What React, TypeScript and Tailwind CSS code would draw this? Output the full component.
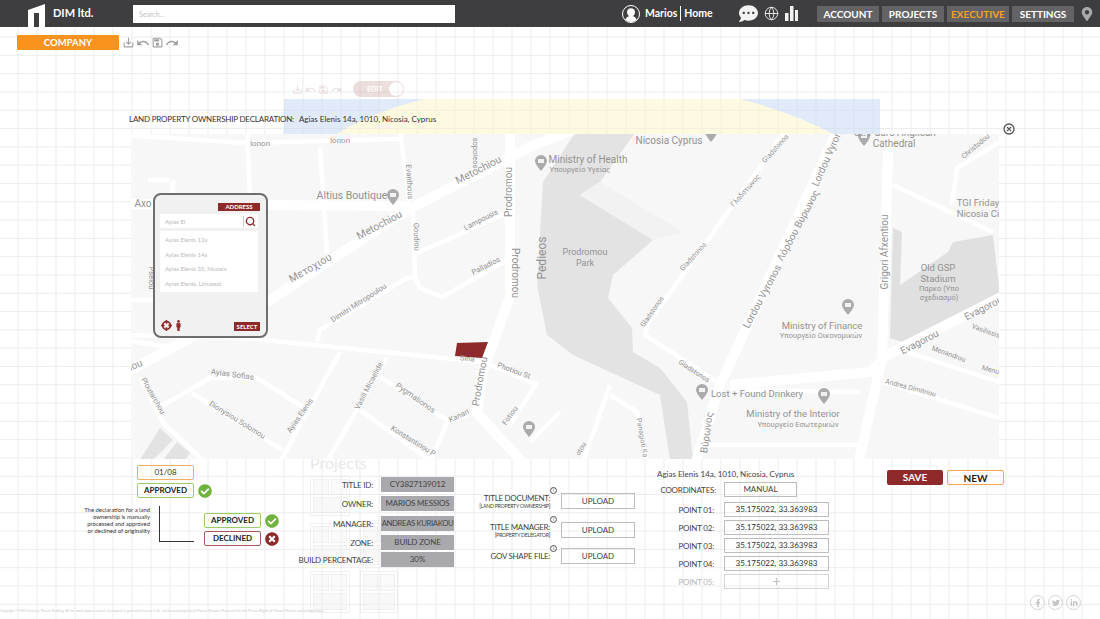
import React from 'react';
import { Globe, Search, Plus } from 'lucide-react';
import { FaCommentDots, FaMapMarkerAlt, FaCheckCircle, FaTimesCircle, FaFacebookF, FaTwitter, FaLinkedinIn, FaMale } from 'react-icons/fa';
import { MdSaveAlt, MdUndo, MdRedo, MdOutlineSave } from 'react-icons/md';

const font = { fontFamily: '"Lato", "Open Sans", sans-serif' };

const navItems = ['ACCOUNT', 'PROJECTS', 'EXECUTIVE', 'SETTINGS'];

const titleFields = [
    ['TITLE ID:', 'CY3827139012', 'mb-[4px]', 'text-[8px] tracking-[-0.1px]'],
    ['OWNER:', 'MARIOS MESSIOS', 'mb-[5px]', 'text-[8px] tracking-[-0.2px]'],
    ['MANAGER:', 'ANDREAS KURIAKOU', 'mb-[4px]', 'text-[7.8px] tracking-[-0.4px]'],
    ['ZONE:', 'BUILD ZONE', 'mb-[2px]', 'text-[8px] tracking-[-0.1px]'],
    ['BUILD PERCENTAGE:', '30%', '', 'text-[8px]'],
];

const points = ['POINT 01:', 'POINT 02:', 'POINT 03:', 'POINT 04:'];

const mainRoads = [
    'M120 376 L190 338 L270 300 L407 210 L530 147 L585 125',
    'M510 125 L510 297 L483 370 L477 413 L525 465',
    'M125 204 L410 206',
    'M840 125 L720 385 L695 465',
    'M889 125 L882 358 L858 465',
    'M1005 295 L887 355 L870 372 L730 385',
];

const minorRoads = [
    'M125 135 L247 143 L400 139',
    'M247 130 L250 195',
    'M400 130 L410 207',
    'M320 147 L327 253',
    'M413 213 L415 277 L420 288 L442 297 L507 260',
    'M417 253 L507 213',
    'M317 342 L320 330 L407 278 L415 277',
    'M125 335 L243 338 L483 362 L535 384',
    'M160 407 L210 378 L257 378 L303 407',
    'M340 352 L280 462',
    'M387 357 L327 462',
    'M380 377 L447 420',
    'M360 410 L432 462',
    'M480 410 L447 423 L430 462',
    'M140 377 L163 423 L205 462',
    'M192 393 L282 450',
    'M125 340 L170 347',
    'M130 300 L156 300',
    'M790 125 L647 325 L645 335 L717 382',
    'M883 382 L1005 420',
    'M907 352 L1005 384',
    'M893 185 L993 232',
    'M1003 140 L957 168 L953 198 L952 205',
    'M610 385 L583 462',
    'M610 395 L637 412 L647 462',
    'M560 412 L530 442',
    'M537 382 L510 425',
    'M860 392 L735 390',
    'M865 445 L705 445',
    'M175 180 L172 184 L173 195',
    'M148 180 L170 180',
];

type MapLabel = [string, number, number, number, number?];

const mapLabels: MapLabel[] = [
    ['Ionon', 260, 146, 0, 8],
    ['Ionon', 340, 143, 0, 8],
    ['Evanthous', 407, 182, 87, 7.5],
    ['sopoleos', 473, 153, 90, 7.5],
    ['Metochiou', 480, 173, -27, 10.5],
    ['Metochiou', 381, 228, -28, 10.5],
    ['Μετοχιου', 312, 271, -30, 10.5],
    ['Prodromou', 512, 192, -90, 10],
    ['Prodromou', 512, 273, 90, 10],
    ['Altius Boutique', 352, 199, 0, 10.5],
    ['Axo', 143, 207, 0, 10],
    ['Goudiou', 414, 237, 88, 7.5],
    ['Lampousis', 482, 222, -27, 7.5],
    ['Palladios', 487, 268, -27, 7.5],
    ['Dimitri Mitropoulou', 360, 305, -33, 7.5],
    ['Pselou', 149, 278, 90, 7.5],
    ['Sina', 467, 361, 5, 7.5],
    ['Photiou St', 513, 373, 20, 7.5],
    ['Prodromou', 483, 382, -80, 10],
    ['Ayias Sofias', 232, 377, 8, 8],
    ['Ploutarchou', 151, 397, 60, 7.5],
    ['Dionysiou Solomou', 236, 422, 32, 7.5],
    ['Ayias Elenis', 302, 417, -55, 7.5],
    ['Vasili Micaelide', 371, 387, -62, 7.5],
    ['Pygmalionos', 414, 400, 35, 8],
    ['Kanari', 460, 418, -25, 7.5],
    ['Konstantinou P', 412, 443, 32, 7.5],
    ['Fotiou', 512, 417, -55, 7.5],
    ['iou', 137, 368, -25, 10],
    ['Nicosia Cyprus', 669, 144, 0, 10],
    ['Ministry of Health', 588, 163, 0, 10],
    ['Υπουργείο Υγείας', 580, 172, 0, 7.5],
    ['St. Paul\'s Anglican', 895, 136, 0, 10],
    ['Cathedral', 894, 147, 0, 10],
    ['Pedieos', 546, 258, -90, 12],
    ['Prodromou', 585, 255, 0, 9],
    ['Park', 585, 266, 0, 9],
    ['Γλαδστώνος', 747, 192, -48, 7],
    ['Gladstonos', 695, 258, -48, 7],
    ['Gladstonos', 777, 150, -48, 7],
    ['Gladstonos', 654, 313, -55, 7],
    ['Gladstonos', 693, 373, 33, 7],
    ['Lordou Vyronos', 765, 298, -62, 10],
    ['Λόρδου Βύρωνος', 801, 227, -62, 10],
    ['Lordou Vyronos', 832, 155, -66, 10],
    ['Βύρωνος', 710, 433, -82, 10],
    ['Grigori Afxentiou', 888, 252, -90, 10],
    ['Old GSP', 938, 271, 0, 9.5],
    ['Stadium', 938, 282, 0, 9.5],
    ['Παρκο (Υπο', 939, 291, 0, 7.5],
    ['σχεδιασμό)', 939, 300, 0, 7.5],
    ['Ministry of Finance', 822, 329, 0, 9.5],
    ['Υπουργείο Οικονομικών', 821, 338, 0, 7.5],
    ['Evagorou', 921, 345, -27, 10],
    ['Evagorou', 985, 311, -27, 10],
    ['Lost + Found Drinkery', 757, 397, 0, 9.5],
    ['Ministry of the Interior', 793, 417, 0, 9.5],
    ['Υπουργείο Εσωτερικών', 798, 427, 0, 7.5],
    ['Menandrou', 948, 356, 20, 7],
    ['Andrea Dimitriou', 910, 390, 15, 7],
    ['TGI Friday', 978, 206, 0, 9.5],
    ['Nicosia Ci', 978, 217, 0, 9.5],
    ['Christodou', 977, 148, -40, 7],
    ['Vasilissis', 985, 333, 20, 7],
    ['Menu', 990, 372, 15, 7],
    ['Panagioti Ka', 640, 438, 80, 7],
    ['otou', 583, 450, -60, 7],
];

const pins = [[541, 163], [393, 197], [848, 307], [702, 392], [824, 396], [529, 429], [864, 138], [711, 134]];

const MapDrawing = () => (
    <svg viewBox="131 134 868 325" className="block w-[868px] h-[325px]" style={{ fontFamily: 'Roboto, sans-serif' }}>
        <rect x="131" y="134" width="868" height="325" fill="#f7f7f7" />
        <path d="M577 130 L637 130 L600 182 L580 195 L653 240 L613 275 L608 298 L632 328 L633 352 L660 368 L687 402 L693 460 L670 460 L660 395 L573 355 L547 335 L537 285 L543 182 Z" fill="#e3e3e3" />
        <path d="M580 195 L600 182 L683 232 L653 240 Z" fill="#f2f2f2" />
        <path d="M893 228 L902 232 L900 285 L948 252 L953 242 L993 235 L1000 295 L903 342 L890 338 Z" fill="#e0e0e0" />
        <path d="M140 460 L160 428 L173 440 L153 460 Z M163 460 L177 442 L190 453 L185 460 Z" fill="#e2e2e2" />
        {mainRoads.map((d) => <path key={d} d={d} fill="none" stroke="#fff" strokeWidth="10" strokeLinejoin="round" />)}
        {minorRoads.map((d) => <path key={d} d={d} fill="none" stroke="#fff" strokeWidth="4.5" strokeLinejoin="round" />)}
        <path d="M457 343 L488 342 L482 358 L455 356 Z" fill="#8f2a2a" />
        {pins.map(([x, y]) => (
            <g key={`${x}-${y}`}>
                <path d={`M${x - 6} ${y - 2} a6 6 0 1 1 12 0 q0 3 -6 10 q-6 -7 -6 -10 Z`} fill="#ababab" />
                <rect x={x - 3} y={y - 4} width="6" height="4" fill="#f2f2f2" />
            </g>
        ))}
        {mapLabels.map(([text, x, y, r, size]) => (
            <text key={`${text}-${x}`} x={x} y={y} fontSize={size ?? 8} fill="#929292" textAnchor="middle" transform={`rotate(${r} ${x} ${y})`}>
                {text}
            </text>
        ))}
    </svg>
);

const AddressPanel = () => (
    <div className="absolute left-[22px] top-[59px] w-[115px] h-[145px] rounded-[8px] border-2 border-[#6e6e6e] bg-[#f1f1f1] flex flex-col pl-[5px] pr-[8px] pt-[8px] pb-[5px]">
        <div className="self-end w-[42px] h-[8px] -mr-[2px] bg-[#8f2a2a] text-white text-[6px] font-bold leading-[8px] text-center">ADDRESS</div>
        <div className="mt-[3px] h-[14px] bg-white flex items-center justify-between pl-[5px] pr-[2px] text-[6px] text-[#b5b5b5]">
            <span>Ayias El</span>
            <span className="flex items-center border-l border-[#ccc] pl-[1px]"><Search size={11} color="#8f2a2a" strokeWidth={3} /></span>
        </div>
        <div className="mt-[3px] h-[61px] bg-white flex flex-col justify-around px-[5px] py-[1px] text-[6px] text-[#b9b9b9]">
            <span>Ayias Elenis 12a</span>
            <span>Ayias Elenis 14a</span>
            <span>Ayias Elenis 35, Nicosia</span>
            <span>Ayias Elenis, Limassol</span>
        </div>
        <div className="mt-auto -mr-[2px] flex items-end justify-between">
            <div className="flex items-center gap-[1px] pl-[1px]">
                <svg viewBox="0 0 12 12" className="w-[11px] h-[11px]">
                    <circle cx="6" cy="6" r="4.2" fill="none" stroke="#8f2a2a" strokeWidth="2" />
                    <path d="M6 0 V4 M6 8 V12 M0 6 H4 M8 6 H12" stroke="#8f2a2a" strokeWidth="1.6" />
                </svg>
                <FaMale size={11} color="#8f2a2a" />
            </div>
            <div className="w-[26px] h-[9px] bg-[#8f2a2a] text-white text-[6px] font-bold leading-[9px] text-center">SELECT</div>
        </div>
    </div>
);

const InfoDot = () => (
    <span className="absolute -right-[7px] -top-[6px] w-[7px] h-[7px] rounded-full border border-[#555] text-[5px] leading-[5px] text-center text-[#555]">i</span>
);

const Thumb = ({ className }: { className: string }) => (
    <div className={`absolute border border-[#e4e4e4] grid grid-cols-2 gap-[2px] p-[2px] opacity-50 ${className}`}>
        <div className="border border-[#e4e4e4] bg-[#f4f4f4]" />
        <div className="border border-[#e4e4e4] bg-[#f7f7f7]" />
        <div className="col-span-2 border border-[#e4e4e4] bg-[#f2f2f2]" />
    </div>
);

const App: React.FC = () => {
    return (
        <div
            className="relative w-[1100px] h-[619px] overflow-hidden flex flex-col bg-white bg-[linear-gradient(#ececee_1px,transparent_1px),linear-gradient(90deg,#ececee_1px,transparent_1px)] bg-[size:19px_18.3px] bg-[position:-1.5px_0px]"
            style={font}
        >
            {/* ghost layer left over behind the dialog */}
            <svg viewBox="0 0 596 35" className="absolute left-[284px] top-[99px] w-[596px] h-[35px]">
                <path d="M0 0 H141 Q90 12 53 35 H0 Z M456 0 H596 V35 H549 Q510 14 456 0 Z" fill="#c9d8f3" fillOpacity="0.55" />
                <path d="M53 35 Q90 12 141 0 L456 0 Q510 14 549 35 Z" fill="#fdf3c4" fillOpacity="0.5" />
            </svg>
            <div className="absolute left-[292px] top-[81px] flex items-center gap-[2px] opacity-15 text-[#8f2a2a]">
                <MdSaveAlt size={11} />
                <MdUndo size={11} />
                <MdOutlineSave size={11} />
                <MdRedo size={11} />
                <div className="relative ml-[9px] w-[51px] h-[16px] rounded-full bg-[#8f2a2a] text-white text-[7px] font-bold leading-[16px] pl-[14px]">
                    EDIT
                    <span className="absolute right-[1px] top-[1px] w-[14px] h-[14px] rounded-full bg-white" />
                </div>
            </div>
            <span className="absolute left-[310px] top-[451px] text-[16px] text-[#e9e9e9]">Projects</span>
            <Thumb className="left-[310px] top-[476px] w-[40px] h-[40px]" />
            <Thumb className="left-[310px] top-[523px] w-[40px] h-[42px]" />
            <Thumb className="left-[360px] top-[523px] w-[38px] h-[42px]" />
            <Thumb className="left-[310px] top-[571px] w-[40px] h-[42px]" />
            <Thumb className="left-[360px] top-[571px] w-[38px] h-[42px]" />

            <header className="relative h-[27px] shrink-0 bg-[#3e3e40] flex items-center">
                <div className="w-[133px] flex items-center self-stretch">
                    <svg viewBox="0 0 17 23" className="ml-[28px] mt-[4px] w-[17px] h-[23px]">
                        <path d="M0 6 L17 0 V23 H11 V9 H6 V23 H0 Z" fill="#fff" />
                    </svg>
                    <span className="ml-[8px] text-[11px] font-bold text-white whitespace-nowrap">DIM ltd.</span>
                </div>
                <div className="w-[322px] h-[18px] bg-white text-[7px] leading-[18px] pl-[6px] text-[#c4c4c4]">Search...</div>
                <div className="ml-[167px] w-[117px] flex items-center">
                    <div className="w-[18px] h-[18px] rounded-full border border-white overflow-hidden flex items-end justify-center">
                        <svg viewBox="0 0 18 18" className="w-[16px] h-[16px]">
                            <circle cx="9" cy="7" r="4.4" fill="#fff" />
                            <path d="M2 18 Q3 11 9 11 Q15 11 16 18 Z" fill="#fff" />
                        </svg>
                    </div>
                    <span className="ml-[5px] text-[10.5px] font-bold text-white">Marios</span>
                    <span className="mx-[3px] w-px h-[15px] bg-white" />
                    <span className="text-[10.5px] font-bold text-white">Home</span>
                </div>
                <FaCommentDots size={19} color="#f2f2f2" />
                <Globe size={15} color="#f2f2f2" strokeWidth={1.4} className="ml-[6px]" />
                <svg viewBox="0 0 13 15" className="ml-[6px] w-[13px] h-[15px]">
                    <path d="M0 7 H3.5 V15 H0 Z M5 0 H8.5 V15 H5 Z M10 4 H13 V15 H10 Z" fill="#f2f2f2" />
                </svg>
                <nav className="ml-[19px] flex gap-[3px]">
                    {navItems.map((item) => (
                        <div
                            key={item}
                            className={`w-[62px] h-[16px] bg-[#636366] text-center text-[10px] font-bold leading-[16px] ${item === 'EXECUTIVE' ? 'text-[#f7a11e]' : 'text-white'}`}
                        >
                            {item}
                        </div>
                    ))}
                </nav>
                <FaMapMarkerAlt size={14} color="#a9a9ab" className="ml-[6px]" />
            </header>

            <div className="relative mt-[8px] ml-[17px] flex items-center gap-[1px] text-[#a0a0a2]">
                <div className="w-[102px] h-[15px] mr-[2px] rounded-[1px] bg-[#f7931e] text-center text-[9.5px] font-bold leading-[15px] text-white">COMPANY</div>
                <MdSaveAlt size={13} />
                <MdUndo size={14} />
                <MdOutlineSave size={13} />
                <MdRedo size={14} />
            </div>

            <div className="relative mt-[63px] ml-[129px] h-[21px] text-[8px] text-[#333] leading-[13px]">
                <span className="tracking-[-0.2px]">LAND PROPERTY OWNERSHIP DECLARATION:</span><span className="ml-[5px]">Agias Elenis 14a, 1010, Nicosia, Cyprus</span>
            </div>

            <section className="relative ml-[131px] w-[868px] h-[325px] shrink-0">
                <MapDrawing />
                <AddressPanel />
                <svg viewBox="0 0 12 12" className="absolute left-[872px] -top-[11px] w-[12px] h-[12px]">
                    <circle cx="6" cy="6" r="5" fill="none" stroke="#555" strokeWidth="1.3" />
                    <path d="M4 4 L8 8 M8 4 L4 8" stroke="#555" strokeWidth="1.1" />
                </svg>
            </section>

            <section className="relative flex items-start">
                {/* status */}
                <div className="ml-[84px] w-[197px] mt-[6px]">
                    <div className="ml-[53px] w-[57px] h-[15px] rounded-[2px] border border-[#f0b060] text-center text-[8px] leading-[13px] text-[#333]">01/08</div>
                    <div className="mt-[3px] ml-[53px] flex items-center gap-[4px]">
                        <div className="w-[57px] h-[15px] rounded-[2px] border border-[#9ccb6b] text-center text-[8px] font-bold leading-[13px] text-[#222]">APPROVED</div>
                        <FaCheckCircle size={14} color="#6fb23e" />
                    </div>
                    <div className="mt-[8px] flex items-start">
                        <p className="w-[66px] whitespace-nowrap text-right text-[5.9px] leading-[7px] text-[#333]">
                            The declaration for a land<br />ownership is manually<br />processed and approved<br />or declined of originality
                        </p>
                        <div className="ml-[9px] w-[35px] h-[36px] border-l border-b border-[#333]" />
                        <div className="ml-[10px] mt-[7px] flex flex-col gap-[3px]">
                            <div className="flex items-center gap-[4px]">
                                <div className="w-[57px] h-[15px] rounded-[2px] border border-[#9ccb6b] text-center text-[8px] font-bold leading-[13px] text-[#222]">APPROVED</div>
                                <FaCheckCircle size={14} color="#6fb23e" />
                            </div>
                            <div className="flex items-center gap-[4px]">
                                <div className="w-[57px] h-[15px] rounded-[2px] border border-[#a85a5a] text-center text-[8px] font-bold leading-[13px] text-[#222]">DECLINED</div>
                                <FaTimesCircle size={14} color="#8f2a2a" />
                            </div>
                        </div>
                    </div>
                </div>

                {/* title fields */}
                <div className="ml-[19px] mt-[18px] w-[154px] flex flex-col text-[#444]">
                    {titleFields.map(([label, value, rowClass, valueClass]) => (
                        <div key={label} className={`flex items-center h-[15px] ${rowClass}`}>
                            <span className="w-[73px] whitespace-nowrap flex justify-end text-[8px] tracking-[-0.2px]">{label}</span>
                            <span className={`ml-[8px] w-[73px] h-full bg-[#a9a9ad] text-center whitespace-nowrap leading-[15px] ${valueClass}`}>{value}</span>
                        </div>
                    ))}
                </div>

                {/* documents */}
                <div className="ml-[16px] mt-[34px] w-[165px] flex flex-col text-[#444]">
                    <div className="flex h-[16px] items-center">
                        <div className="w-[80px] text-[8px] tracking-[-0.3px] leading-[10px] whitespace-nowrap flex flex-col items-end">
                            <span className="relative">TITLE DOCUMENT:<InfoDot /></span>
                            <span className="text-[5.3px] leading-[6px]">[LAND PROPERTY OWNERSHIP]</span>
                        </div>
                        <div className="ml-[11px] w-[74px] h-[16px] border border-[#bdbdbd] text-center text-[8px] leading-[14px]">UPLOAD</div>
                    </div>
                    <div className="flex h-[16px] mt-[13px] items-center">
                        <div className="w-[80px] text-[8px] tracking-[-0.3px] leading-[10px] whitespace-nowrap flex flex-col items-end">
                            <span className="relative">TITLE MANAGER:<InfoDot /></span>
                            <span className="text-[5.3px] leading-[6px]">[PROPERTY DELEGATOR]</span>
                        </div>
                        <div className="ml-[11px] w-[74px] h-[16px] border border-[#bdbdbd] text-center text-[8px] leading-[14px]">UPLOAD</div>
                    </div>
                    <div className="flex h-[16px] mt-[10px] items-center">
                        <div className="w-[80px] flex justify-end text-[8px] tracking-[-0.3px] leading-[10px] whitespace-nowrap">
                            <span className="relative">GOV SHAPE FILE:<InfoDot /></span>
                        </div>
                        <div className="ml-[11px] w-[74px] h-[16px] border border-[#bdbdbd] text-center text-[8px] leading-[14px]">UPLOAD</div>
                    </div>
                </div>

                {/* coordinates */}
                <div className="ml-[22px] mt-[10px] w-[172px] flex flex-col text-[#444]">
                    <span className="h-[13px] text-[8px] leading-[10px] whitespace-nowrap">Agias Elenis 14a, 1010, Nicosia, Cyprus</span>
                    <div className="flex items-center h-[15px]">
                        <span className="w-[59px] text-right text-[8px] tracking-[-0.2px] whitespace-nowrap">COORDINATES:</span>
                        <div className="ml-[8px] w-[73px] h-[15px] border border-[#bdbdbd] text-center text-[8px] leading-[13px]">MANUAL</div>
                    </div>
                    <div className="mt-[5px] flex flex-col gap-[3px]">
                        {points.map((p) => (
                            <div key={p} className="flex items-center h-[15px]">
                                <span className="w-[57px] text-right text-[8px] tracking-[-0.2px]">{p}</span>
                                <div className="ml-[10px] w-[105px] h-[15px] border border-[#bdbdbd] text-center text-[8px] leading-[13px] text-[#333]">35.175022, 33.363983</div>
                            </div>
                        ))}
                        <div className="flex items-center h-[15px] text-[#b5b5b5]">
                            <span className="w-[57px] text-right text-[8px] tracking-[-0.2px]">POINT 05:</span>
                            <div className="ml-[10px] w-[105px] h-[15px] border border-[#d5d5d5] flex items-center justify-center">
                                <Plus size={11} color="#c4c4c4" strokeWidth={2.5} />
                            </div>
                        </div>
                    </div>
                </div>

                {/* actions */}
                <div className="ml-[58px] mt-[11px] flex gap-[4px]">
                    <div className="w-[56px] h-[15px] rounded-[2px] bg-[#8f2a2a] text-center text-[10px] font-bold leading-[15px] text-white">SAVE</div>
                    <div className="w-[57px] h-[15px] rounded-[2px] border border-[#f4a64a] text-center text-[10px] font-bold leading-[14px] text-[#222]">NEW</div>
                </div>
            </section>

            <footer className="absolute left-0 right-0 bottom-[5px] flex items-end justify-between">
                <p className="w-[420px] whitespace-nowrap overflow-hidden text-[3.4px] leading-[5px] text-[#c9c9c9]">
                    Copyright © DIM Circuitry. Patent Pending. All the work above created, developed or generated herein is the intellectual property of Marios Messios. Presented for the Private Rights of Marios Messios and collaborators.
                </p>
                <div className="mr-[19px] mb-[4px] flex gap-[3px] text-[#c5c5c5]">
                    {[FaFacebookF, FaTwitter, FaLinkedinIn].map((Icon, i) => (
                        <span key={i} className="w-[15px] h-[15px] rounded-full border border-[#d5d5d5] flex items-center justify-center">
                            <Icon size={8} />
                        </span>
                    ))}
                </div>
            </footer>
        </div>
    );
};

export default App;
